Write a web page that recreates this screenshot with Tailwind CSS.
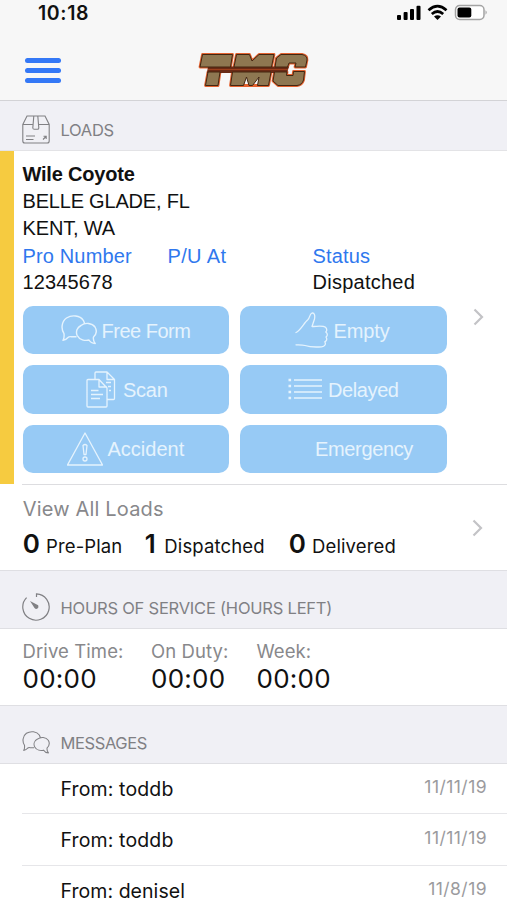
<!DOCTYPE html>
<html lang="en">
<head>
<meta charset="utf-8">
<title>TMC Loads</title>
<script src="https://cdn.jsdelivr.net/npm/@tailwindcss/browser@4"></script>
</head>
<body class="bg-white text-[#111] overflow-hidden">
<svg class="hidden">
  <symbol id="chat" viewBox="0 0 36 30"><path fill="none" stroke="currentColor" stroke-width="1.400" stroke-linejoin="round" d="M15.500 21.800H10.500C8.500 21.300 8 21.500 7 22.500C5.500 24.300 4 25 2 25.300C3.400 23.300 3.200 20.500 3 18.600C-.2 14 .5 6.500 5.500 3C11-.5 19 .5 22.300 5.300L23.700 8.500M20 10.500C24 7.200 31 7.800 34 12C36 15.500 35.200 19.500 32.500 22C32 24.500 33 27 34.200 28.500C31 28.300 29 26.800 28 25C24 26 18.500 25 16.200 20.500C14.500 16.800 16 12.500 20 10.500Z"/></symbol>
  <symbol id="chevron" viewBox="0 0 11 18"><path d="M1.500 1.500 9 9 1.500 16.500" fill="none" stroke="#c3c3c6" stroke-width="2.200"/></symbol>
</svg>
<div class="flex h-[900px] w-[507px] flex-col font-['Inter',sans-serif]">
  <header class="flex h-[101px] shrink-0 flex-col border-b border-[#d3d3d6] bg-[#f7f7f7]">
    <div class="flex h-[27px] items-start justify-between pl-[38px] pr-[19px]">
      <span class="text-[19.500px] font-semibold leading-[27px] tracking-[0.600px]">10:18</span>
      <svg class="mt-[4px]" width="91" height="18" viewBox="0 0 91 18">
        <g fill="#000"><rect x="0" y="11" width="4" height="5" rx="1"/><rect x="6.600" y="8" width="4" height="8" rx="1"/><rect x="13" y="5" width="4" height="11" rx="1"/><rect x="19.500" y="1.800" width="4" height="14.200" rx="1"/></g>
        <g fill="none" stroke="#000" stroke-width="2.700"><path d="M31.500 6.200Q40.500-1.800 49.500 6.200"/><path d="M34.800 10Q40.500 5 46.200 10"/></g><path d="M37 12.500Q40.500 9.800 44 12.500L40.500 16Z"/>
        <rect x="58.500" y="1.500" width="28.500" height="14" rx="4.200" fill="#fff" stroke="#a3a3a3" stroke-width="1.500"/><rect x="60.500" y="3.600" width="13.800" height="10" rx="2"/><path d="M88.500 6.300Q91 8.500 88.500 10.700Z" fill="#a3a3a3"/>
      </svg>
    </div>
    <div class="relative flex h-[73px] items-center justify-center">
      <button class="absolute left-[25px] top-[30.500px] flex flex-col gap-[5px]" aria-label="Menu"><span class="h-[5.200px] w-9 rounded-full bg-[#3478f6]"></span><span class="h-[5.200px] w-9 rounded-full bg-[#3478f6]"></span><span class="h-[5.200px] w-9 rounded-full bg-[#3478f6]"></span></button>
      <svg class="mt-[13px] ml-[1px]" width="112" height="36" viewBox="0 0 112 36" role="img" aria-label="TMC">
        <g fill="none" stroke="#e4622f" stroke-width="2.800" stroke-linejoin="round">
          <path d="M4.500 2.500H34.500L32.500 15H2Z"/><path d="M10 20H22L20 33.500H7.500Z"/>
          <path d="M38.500 2.500H51.500L54 9L61 2.500H76L73.500 15H36Z"/><path d="M34.500 20H73L70.500 33.500H32.500Z"/>
          <path d="M83 2.500H104Q109.500 3.500 109 8L107.500 15H97L98 11H91L89.500 15H77L78.500 6Z"/><path d="M76.500 20H89L88.500 23.500H95L95.500 19.500H106.500L105.500 28Q104 33 99 33.500H80L75 29Z"/>
        </g>
        <path d="M10 14.500H91L89 21H9Z" fill="#6a2a15"/>
        <g fill="#8e7751" stroke="#422611" stroke-width="1" stroke-linejoin="round">
          <path d="M4.500 2.500H34.500L32.500 15H2Z"/><path d="M10 20H22L20 33.500H7.500Z"/>
          <path d="M38.500 2.500H51.500L54 9L61 2.500H76L73.500 15H36Z"/><path d="M34.500 20H73L70.500 33.500H59.500L61 25L54.500 33.500H51L48.500 25L45.500 33.500H32.500Z"/>
          <path d="M83 2.500H104Q109.500 3.500 109 8L107.500 15H97L98 11H91L89.500 15H77L78.500 6Z"/><path d="M76.500 20H89L88.500 23.500H95L95.500 19.500H106.500L105.500 28Q104 33 99 33.500H80L75 29Z"/>
        </g>
        <path d="M10 17.500H90" stroke="#a94620" stroke-width=".8"/>
      </svg>
    </div>
  </header>

  <section class="flex h-[50px] shrink-0 items-center border-b border-[#e3e3e6] bg-[#f0f0f5] pl-[22px] pt-[8px] text-[#808084]">
    <svg width="28" height="29" viewBox="0 0 28 29" fill="none" stroke="currentColor" stroke-width="1.100"><path d="M.8 9.500 5 1H23L27.200 9.500V26Q27.200 28 25.200 28H2.800Q.8 28 .8 26ZM.8 9.500H10.500M17 9.500H27.200M11.800 1 10.800 13Q11 14.300 12.300 14.300H15.500Q16.800 14.300 16.800 13L15.800 1M4 21H13M4 24.500H11.500M21 24.500 24 21.500M21.500 21.200H24.200V24"/></svg>
    <h2 class="ml-[10.500px] text-[16.500px] leading-5 tracking-[-0.300px]">LOADS</h2>
  </section>

  <section class="flex h-[333px] shrink-0 font-['Liberation_Sans',sans-serif] text-[20px] leading-[27px]">
    <div class="w-[14px] shrink-0 bg-[#f6cb40]"></div>
    <div class="ml-[8.500px] flex w-[424px] flex-col pt-[10px]">
      <div class="font-bold tracking-[-0.200px]">Wile Coyote</div>
      <div class="tracking-[-0.200px]">BELLE GLADE, FL</div>
      <div class="tracking-[-0.150px]">KENT, WA</div>
      <div class="grid grid-cols-[145px_145px_1fr] pt-px leading-[27px] text-[#2f78ee]"><span class="tracking-[0.150px]">Pro Number</span><span class="tracking-[0.350px]">P/U At</span><span class="tracking-[0.150px]">Status</span></div>
      <div class="grid grid-cols-[145px_145px_1fr] leading-[24px]"><span class="tracking-[0.150px]">12345678</span><span></span><span class="tracking-[0.250px]">Dispatched</span></div>
      <div class="mt-[12px] grid grid-cols-2 gap-x-[11px] gap-y-[11px] text-[#e5f3fd]">
        <button class="flex h-[48.300px] items-center rounded-[10px] bg-[#97caf5] pl-[38px]"><svg class="h-[30px] w-[36px]"><use href="#chat"/></svg><span class="ml-[5px] mt-[2px] tracking-[-0.500px]">Free Form</span></button>
        <button class="flex h-[48.300px] items-center rounded-[10px] bg-[#97caf5] pl-[55px]"><svg width="34" height="36" viewBox="0 0 34 36" fill="none" stroke="currentColor" stroke-width="1.300" stroke-linecap="round" stroke-linejoin="round"><path d="M1 20.500C5 19 9 11 13 7.500C15 5.500 14.500 2 17 1C20 .8 20 4 19.500 7L17 14.500C22 14.500 28 13.300 30.500 15.300C32.800 17.500 31.300 19.500 30.800 20C33 21.700 32.600 24 31 25C32.500 27.300 31.500 29 29.800 29.800C31.200 32 30 34.500 26.500 34.800C20 35.300 14.500 35 10 33.500C7 32.600 4 32.900 1 32.800"/></svg><span class="ml-[4.500px] mt-[2px] tracking-[-0.100px]">Empty</span></button>
        <button class="flex h-[48.300px] items-center rounded-[10px] bg-[#97caf5] pl-[63px]"><svg width="30" height="37" viewBox="0 0 30 37" fill="none" stroke="currentColor" stroke-width="1.300" stroke-linejoin="round"><path d="M1 9.500Q1 8.500 2 8.500H13L21 17V35Q21 36 20 36H2Q1 36 1 35ZM13 8.500V16H21M9 8.500V2Q9 1 10 1H21L28.500 8.500V27.500Q28.500 28.500 27.500 28.500H21M21 1V8.500H28.500M5 19.500H12.500M5 23.500H17M5 27.500H14M20 11.500H25M22 15.500H25M23 19.500H25"/></svg><span class="ml-[7.500px] mt-[2px] tracking-[-0.250px]">Scan</span></button>
        <button class="flex h-[48.300px] items-center rounded-[10px] bg-[#97caf5] pl-[48px]"><svg width="34" height="22" viewBox="0 0 34 22" stroke="currentColor" stroke-width="1.500"><path d="M6 2H34M6 8H34M6 14H34M6 20H34"/><path stroke-width="2.600" d="M.5 2H3.100M.5 8H3.100M.5 14H3.100M.5 20H3.100"/></svg><span class="ml-[6px] mt-[2px] tracking-[-0.400px]">Delayed</span></button>
        <button class="flex h-[48.300px] items-center rounded-[10px] bg-[#97caf5] pl-[44px]"><svg width="36" height="34" viewBox="0 0 36 34" fill="none" stroke="currentColor" stroke-width="1.300" stroke-linejoin="round"><path d="M18 1 35.500 33H.5Z"/><path d="M16 13.500Q18 11.500 20 13.500L19 22.500H17Z"/><circle cx="18" cy="27" r="2"/></svg><span class="ml-[5px] mt-px tracking-[0px]">Accident</span></button>
        <button class="flex h-[48.300px] items-center rounded-[10px] bg-[#97caf5] pl-[75px]"><span class="mt-px tracking-[-0.350px]">Emergency</span></button>
      </div>
    </div>
    <svg class="ml-[26px] mt-[157px] h-[18px] w-[11px]"><use href="#chevron"/></svg>
  </section>

  <section class="flex h-[87px] shrink-0 border-b border-[#dfdfe3]">
    <div class="ml-[22px] flex flex-1 border-t border-[#dddde0]">
      <div class="w-[450px] pl-[0.700px] pt-[10px]">
        <div class="text-[20px] leading-[28px] tracking-[0.180px] text-[#88888b]">View All Loads</div>
        <div class="grid grid-cols-[122px_144px_1fr] items-baseline text-[18.500px] leading-[42px] tracking-[0.130px]">
          <div><b class="mr-[6px] text-[26px] font-semibold">0</b>Pre-Plan</div>
          <div><b class="mr-[8.500px] text-[26px] font-semibold">1</b>Dispatched</div>
          <div><b class="mr-[6px] text-[26px] font-semibold">0</b>Delivered</div>
        </div>
      </div>
      <svg class="mt-[34px] h-[18px] w-[11px] shrink-0"><use href="#chevron"/></svg>
    </div>
  </section>

  <section class="flex h-[58px] shrink-0 items-center border-b border-[#dfdfe3] bg-[#f0f0f5] pl-[22px] pt-[15px] text-[#808084]">
    <svg width="28" height="28" viewBox="0 0 28 28" fill="none" stroke="currentColor" stroke-width="1.200"><path d="M14.500 4V.8A13.200 13.200 0 1 1 4.600 4.700"/><path d="M8 8 16.200 12.300Q17 14.500 15.500 15.500T12.500 15Z" fill="currentColor" stroke="none"/></svg>
    <h2 class="ml-[10.500px] mt-px text-[16.500px] leading-5 tracking-[-0.220px]">HOURS OF SERVICE (HOURS LEFT)</h2>
  </section>

  <section class="grid h-[77px] shrink-0 grid-cols-[128.500px_105.500px_1fr] border-b border-[#dfdfe3] pl-[22.500px] pt-[8px]">
    <div><div class="text-[18.500px] leading-[28px] tracking-[0.100px] text-[#88888b]">Drive Time:</div><div class="text-[26px] leading-[28px] tracking-[0.250px]">00:00</div></div>
    <div><div class="text-[18.500px] leading-[28px] tracking-[0.100px] text-[#88888b]">On Duty:</div><div class="text-[26px] leading-[28px] tracking-[0.250px]">00:00</div></div>
    <div><div class="text-[18.500px] leading-[28px] tracking-[0.050px] text-[#88888b]">Week:</div><div class="text-[26px] leading-[28px] tracking-[0.250px]">00:00</div></div>
  </section>

  <section class="flex h-[58px] shrink-0 items-center border-b border-[#dfdfe3] bg-[#f0f0f5] pl-[22px] pt-[15px] text-[#808084]">
    <svg class="h-[23px] w-[28px]"><use href="#chat"/></svg>
    <h2 class="ml-[10.500px] mt-px text-[16.500px] leading-5 tracking-[-0.400px]">MESSAGES</h2>
  </section>

  <section class="flex shrink-0 flex-col pl-[22px]">
    <div class="flex h-[50px] items-center justify-between border-b border-[#e6e6e9] pl-[38.500px] pr-[20px]"><span class="mt-[3px] text-[19.500px] tracking-[0.130px]">From: toddb</span><span class="mt-[-2px] text-[17.500px] tracking-[0.450px] text-[#9b9b9e]">11/11/19</span></div>
    <div class="flex h-[51.500px] items-center justify-between border-b border-[#e6e6e9] pl-[38.500px] pr-[20px]"><span class="mt-[2px] text-[19.500px] tracking-[0.130px]">From: toddb</span><span class="mt-[-2px] text-[17.500px] tracking-[0.450px] text-[#9b9b9e]">11/11/19</span></div>
    <div class="flex h-[34px] items-end justify-between pl-[38.500px] pr-[20px] leading-[18px]"><span class="text-[19.500px] tracking-[0.050px]">From: denisel</span><span class="mb-[2px] text-[17.500px] tracking-[0.450px] text-[#9b9b9e]">11/8/19</span></div>
  </section>
</div>
</body>
</html>
